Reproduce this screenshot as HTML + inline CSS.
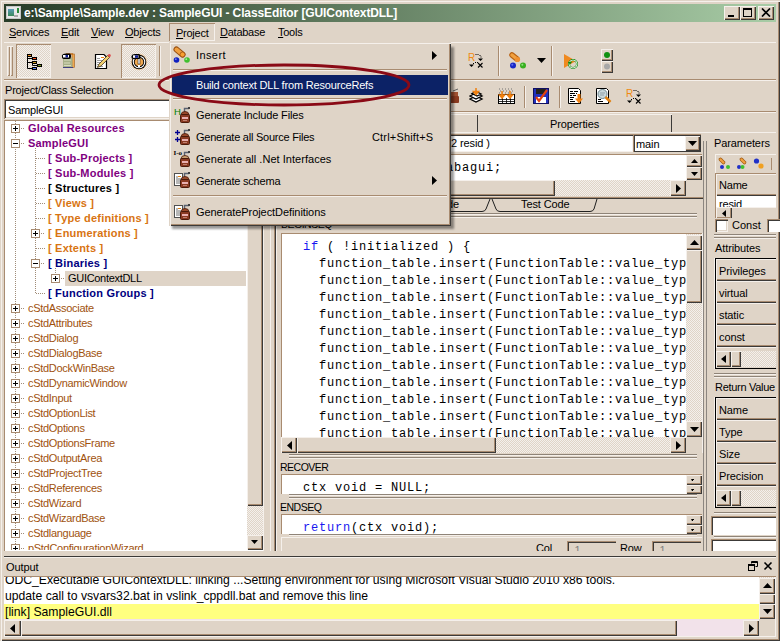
<!DOCTYPE html><html><head><meta charset="utf-8"><style>
*{margin:0;padding:0;box-sizing:border-box}
html,body{width:780px;height:641px;overflow:hidden;background:#dfd4c7;font-family:"Liberation Sans",sans-serif;font-size:11px;color:#000}
div{position:absolute}
.t{white-space:nowrap;line-height:13px;letter-spacing:-0.2px}
.raised{background:#dfd4c7;box-shadow:inset 1px 1px 0 #f5f0eb, inset -1px -1px 0 #3c3a38, inset -2px -2px 0 #a88b70}
.raisedf{background:#dfd4c7;box-shadow:inset 1px 1px 0 #dfd4c7, inset 2px 2px 0 #f5f0eb, inset -1px -1px 0 #3c3a38, inset -2px -2px 0 #a88b70}
.sunk{background:#fff;box-shadow:inset 1px 1px 0 #a88b70, inset -1px -1px 0 #f5f0eb, inset 2px 2px 0 #3c3a38, inset -2px -2px 0 #dfd4c7}
.sunk1{box-shadow:inset 1px 1px 0 #a88b70, inset -1px -1px 0 #f5f0eb}
.raise1{box-shadow:inset 1px 1px 0 #f5f0eb, inset -1px -1px 0 #a88b70}
.check{background-color:#dfd4c7;background-image:repeating-conic-gradient(#f4f0ec 0 25%, #dfd4c7 0 50%);background-size:2px 2px}
.hl{height:1px;background:#a88b70}
.hw{height:1px;background:#f5f0eb}
.mono{font-family:"Liberation Mono",monospace;font-size:12px;letter-spacing:0.8px;white-space:nowrap;line-height:17px;padding-top:1px}
</style></head><body>
<div style="left:0px;top:0px;width:780px;height:641px;box-shadow:inset 1px 1px 0 #dfd4c7, inset 2px 2px 0 #f5f0eb, inset -1px -1px 0 #3c3a38, inset -2px -2px 0 #a88b70;background:#dfd4c7"></div>
<div style="left:4px;top:4px;width:772px;height:18px;background:linear-gradient(to right,#283c27 0%,#a8cca6 100%)"></div>
<div style="left:6px;top:6px;width:15px;height:13px;background:#e8e8e8;border:1px solid #c8c8c8"><div style="left:1px;top:2px;width:6px;height:7px;background:linear-gradient(#5a9ab8,#3a8a5a)"></div><div style="left:10px;top:1px;width:2px;height:5px;background:#2a8a3a"></div><div style="left:7px;top:8px;width:4px;height:2px;background:#aaa"></div></div>
<div class="t" style="left:24px;top:6px;font-weight:bold;font-size:12px;color:#fff;line-height:15px;letter-spacing:-0.1px">e:\Sample\Sample.dev : SampleGUI - ClassEditor [GUIContextDLL]</div>
<div class="raised" style="left:724px;top:6px;width:16px;height:14px;"></div>
<div class="raised" style="left:740px;top:6px;width:16px;height:14px;"></div>
<div class="raised" style="left:758px;top:6px;width:16px;height:14px;"></div>
<div style="left:728px;top:15px;width:6px;height:2px;background:#000"></div>
<div style="left:743px;top:8px;width:9px;height:9px;border:1px solid #000;border-top-width:2px"></div>
<svg style="position:absolute;left:761px;top:8px" width="10" height="9" viewBox="0 0 10 9"><path d="M1 0.5l8 8M9 0.5l-8 8" stroke="#000" stroke-width="1.7"/></svg>
<div class="t" style="left:9px;top:26px;font-size:11px;letter-spacing:-0.25px"><u>S</u>ervices</div>
<div class="t" style="left:61px;top:26px;font-size:11px;letter-spacing:-0.25px"><u>E</u>dit</div>
<div class="t" style="left:91px;top:26px;font-size:11px;letter-spacing:-0.25px"><u>V</u>iew</div>
<div class="t" style="left:125px;top:26px;font-size:11px;letter-spacing:-0.25px"><u>O</u>bjects</div>
<div class="t" style="left:176px;top:27px;font-size:11px;letter-spacing:-0.25px"><u>P</u>roject</div>
<div class="t" style="left:220px;top:26px;font-size:11px;letter-spacing:-0.25px"><u>D</u>atabase</div>
<div class="t" style="left:278px;top:26px;font-size:11px;letter-spacing:-0.25px"><u>T</u>ools</div>
<div class="sunk1" style="left:169px;top:23px;width:46px;height:18px;"></div>
<div style="left:4px;top:42px;width:772px;height:1px;background:#f5f0eb"></div>
<div class="raise1" style="left:7px;top:46px;width:3px;height:30px;"></div>
<div class="raise1" style="left:10px;top:46px;width:3px;height:30px;"></div>
<div class="check sunk1" style="left:16px;top:44px;width:35px;height:34px;"></div>
<div class="check sunk1" style="left:121px;top:44px;width:35px;height:34px;"></div>
<div style="left:4px;top:79px;width:772px;height:1px;background:#a88b70"></div>
<div style="left:4px;top:80px;width:772px;height:1px;background:#f5f0eb"></div>
<svg style="position:absolute;left:24px;top:50px" width="24" height="24" viewBox="24 50 24 24"><path d="M27.5 56v12.5H32M27.5 58.5H32M27.5 62.5H32M32.5 63v2.5H37" stroke="#000" fill="none" stroke-width="1"/><rect x="27" y="54" width="5" height="3" fill="#000"/><rect x="28" y="55" width="3" height="1" fill="#f09020"/><rect x="32" y="57" width="5" height="3" fill="#000"/><rect x="33" y="58" width="3" height="1" fill="#f05020"/><rect x="32" y="61" width="5" height="3" fill="#000"/><rect x="33" y="62" width="3" height="1" fill="#d0a020"/><rect x="37" y="64" width="5" height="3" fill="#000"/><rect x="38" y="65" width="3" height="1" fill="#80a020"/><rect x="32" y="67" width="5" height="3" fill="#000"/><rect x="33" y="68" width="3" height="1" fill="#5080f0"/></svg>
<svg style="position:absolute;left:56px;top:50px" width="24" height="24" viewBox="56 50 24 24"><rect x="72" y="54" width="2.5" height="13.5" fill="#f0a850" stroke="#a06020" stroke-width="0.6"/><rect x="63" y="57.5" width="9.5" height="10" fill="#a8b088"/><path d="M64 60h7M64 63h6M64 65.5h7" stroke="#d8dcc0" stroke-width="1"/><path d="M63 67.5h10" stroke="#404080" stroke-width="1"/><path d="M66 54h7" stroke="#c07020" stroke-width="1.5"/><path d="M62 55.5Q62.5 53.5 66 53.5H69.5Q71 53.5 71 56.5Q71 59 69 59H64Q61.5 59 62 55.5z" fill="#000"/><rect x="63" y="55" width="6" height="2.5" fill="#fff"/><rect x="65.5" y="55" width="2.5" height="2.5" fill="#102090"/></svg>
<svg style="position:absolute;left:90px;top:50px" width="24" height="24" viewBox="90 50 24 24"><path d="M95.5 54.5H104L106.5 57V68.5H95.5z" fill="#fff" stroke="#000" stroke-width="1.2"/><path d="M97 58.5h3M97 60.5h5M97 62.5h4M97 64.5h3M97 66.5h6" stroke="#909090" stroke-width="0.9"/><path d="M101 57.5h3" stroke="#f08010" stroke-width="1"/><path d="M97.5 67.5L99 64L107.5 55.5L109.5 57.5L101 66z" fill="#f0d070" stroke="#302010" stroke-width="0.7"/><path d="M107.5 55.5L108.5 54.3Q109.5 53.5 110.5 54.5Q111.3 55.5 110.5 56.5L109.5 57.5z" fill="#e05050"/></svg>
<svg style="position:absolute;left:126px;top:50px" width="24" height="24" viewBox="126 50 24 24"><circle cx="139" cy="62" r="8.3" fill="#f8c890" opacity="0.7"/><circle cx="139" cy="62" r="7.3" fill="#000"/><circle cx="139" cy="62" r="6.3" fill="#fff"/><circle cx="139" cy="62" r="5.2" fill="#000"/><circle cx="139" cy="62" r="4.3" fill="#f0a850"/><rect x="138" y="58" width="2" height="6" fill="#fff" stroke="#000" stroke-width="0.5"/><rect x="138" y="65" width="2" height="2" fill="#fff"/><path d="M131.5 56Q132 54 135 54H139Q140.5 54 140.5 56.5Q140.5 59 139 59H133.5Q131 59 131.5 56z" fill="#000"/><rect x="133" y="55.3" width="5.5" height="2.5" fill="#fff"/><rect x="135" y="55.3" width="3" height="2.5" fill="#102090"/></svg>
<div style="left:159px;top:46px;width:1px;height:30px;background:#a88b70"></div>
<div style="left:160px;top:46px;width:1px;height:30px;background:#f5f0eb"></div>
<div class="t" style="left:5px;top:84px;font-size:11px;letter-spacing:-0.2px;color:#000">Project/Class Selection</div>
<div class="sunk" style="left:4px;top:99px;width:260px;height:20px;"></div>
<div class="t" style="left:8px;top:104px;font-size:11px;letter-spacing:-0.2px">SampleGUI</div>
<div style="left:4px;top:120px;width:260px;height:432px;background:#fff;box-shadow:inset 1px 1px 0 #a88b70, inset -1px -1px 0 #f5f0eb"></div>
<div style="left:0;top:0;width:246px;height:550px;overflow:hidden">
<div style="left:15px;top:121px;width:1px;height:430px;background:repeating-linear-gradient(#a08c78 0 1px,transparent 1px 2px)"></div>
<div style="left:35px;top:148px;width:1px;height:146px;background:repeating-linear-gradient(#a08c78 0 1px,transparent 1px 2px)"></div>
<div style="left:55px;top:268px;width:1px;height:6px;background:repeating-linear-gradient(#a08c78 0 1px,transparent 1px 2px)"></div>
<div style="left:11px;top:124px;width:9px;height:9px;background:#fff;border:1px solid #a88b70"></div>
<div style="left:13px;top:128px;width:5px;height:1px;background:#000"></div>
<div style="left:15px;top:126px;width:1px;height:5px;background:#000"></div>
<div style="left:21px;top:128px;width:4px;height:1px;background:repeating-linear-gradient(to right,#a08c78 0 1px,transparent 1px 2px)"></div>
<div class="t" style="left:28px;top:121px;color:#800080;font-weight:bold;line-height:14px;letter-spacing:0.2px">Global Resources</div>
<div style="left:11px;top:139px;width:9px;height:9px;background:#fff;border:1px solid #a88b70"></div>
<div style="left:13px;top:143px;width:5px;height:1px;background:#000"></div>
<div style="left:21px;top:143px;width:4px;height:1px;background:repeating-linear-gradient(to right,#a08c78 0 1px,transparent 1px 2px)"></div>
<div class="t" style="left:28px;top:136px;color:#800080;font-weight:bold;line-height:14px;letter-spacing:0.2px">SampleGUI</div>
<div style="left:36px;top:158px;width:9px;height:1px;background:repeating-linear-gradient(to right,#a08c78 0 1px,transparent 1px 2px)"></div>
<div class="t" style="left:48px;top:151px;color:#800080;font-weight:bold;line-height:14px;letter-spacing:0.2px">[ Sub-Projects ]</div>
<div style="left:36px;top:173px;width:9px;height:1px;background:repeating-linear-gradient(to right,#a08c78 0 1px,transparent 1px 2px)"></div>
<div class="t" style="left:48px;top:166px;color:#800080;font-weight:bold;line-height:14px;letter-spacing:0.2px">[ Sub-Modules ]</div>
<div style="left:36px;top:188px;width:9px;height:1px;background:repeating-linear-gradient(to right,#a08c78 0 1px,transparent 1px 2px)"></div>
<div class="t" style="left:48px;top:181px;color:#000000;font-weight:bold;line-height:14px;letter-spacing:0.2px">[ Structures ]</div>
<div style="left:36px;top:203px;width:9px;height:1px;background:repeating-linear-gradient(to right,#a08c78 0 1px,transparent 1px 2px)"></div>
<div class="t" style="left:48px;top:196px;color:#d87412;font-weight:bold;line-height:14px;letter-spacing:0.2px">[ Views ]</div>
<div style="left:36px;top:218px;width:9px;height:1px;background:repeating-linear-gradient(to right,#a08c78 0 1px,transparent 1px 2px)"></div>
<div class="t" style="left:48px;top:211px;color:#d87412;font-weight:bold;line-height:14px;letter-spacing:0.2px">[ Type definitions ]</div>
<div style="left:31px;top:229px;width:9px;height:9px;background:#fff;border:1px solid #a88b70"></div>
<div style="left:33px;top:233px;width:5px;height:1px;background:#000"></div>
<div style="left:35px;top:231px;width:1px;height:5px;background:#000"></div>
<div style="left:41px;top:233px;width:4px;height:1px;background:repeating-linear-gradient(to right,#a08c78 0 1px,transparent 1px 2px)"></div>
<div class="t" style="left:48px;top:226px;color:#d87412;font-weight:bold;line-height:14px;letter-spacing:0.2px">[ Enumerations ]</div>
<div style="left:36px;top:248px;width:9px;height:1px;background:repeating-linear-gradient(to right,#a08c78 0 1px,transparent 1px 2px)"></div>
<div class="t" style="left:48px;top:241px;color:#d87412;font-weight:bold;line-height:14px;letter-spacing:0.2px">[ Extents ]</div>
<div style="left:31px;top:259px;width:9px;height:9px;background:#fff;border:1px solid #a88b70"></div>
<div style="left:33px;top:263px;width:5px;height:1px;background:#000"></div>
<div style="left:41px;top:263px;width:4px;height:1px;background:repeating-linear-gradient(to right,#a08c78 0 1px,transparent 1px 2px)"></div>
<div class="t" style="left:48px;top:256px;color:#000080;font-weight:bold;line-height:14px;letter-spacing:0.2px">[ Binaries ]</div>
<div style="left:65px;top:271px;width:182px;height:15px;background:#dfd4c7"></div>
<div style="left:51px;top:274px;width:9px;height:9px;background:#fff;border:1px solid #a88b70"></div>
<div style="left:53px;top:278px;width:5px;height:1px;background:#000"></div>
<div style="left:55px;top:276px;width:1px;height:5px;background:#000"></div>
<div style="left:61px;top:278px;width:4px;height:1px;background:repeating-linear-gradient(to right,#a08c78 0 1px,transparent 1px 2px)"></div>
<div class="t" style="left:68px;top:271px;color:#000000;font-weight:normal;line-height:14px;letter-spacing:-0.3px">GUIContextDLL</div>
<div style="left:36px;top:293px;width:9px;height:1px;background:repeating-linear-gradient(to right,#a08c78 0 1px,transparent 1px 2px)"></div>
<div class="t" style="left:48px;top:286px;color:#000080;font-weight:bold;line-height:14px;letter-spacing:0.2px">[ Function Groups ]</div>
<div style="left:11px;top:304px;width:9px;height:9px;background:#fff;border:1px solid #a88b70"></div>
<div style="left:13px;top:308px;width:5px;height:1px;background:#000"></div>
<div style="left:15px;top:306px;width:1px;height:5px;background:#000"></div>
<div style="left:21px;top:308px;width:4px;height:1px;background:repeating-linear-gradient(to right,#a08c78 0 1px,transparent 1px 2px)"></div>
<div class="t" style="left:28px;top:301px;color:#a0520e;font-weight:normal;line-height:14px;letter-spacing:-0.3px">cStdAssociate</div>
<div style="left:11px;top:319px;width:9px;height:9px;background:#fff;border:1px solid #a88b70"></div>
<div style="left:13px;top:323px;width:5px;height:1px;background:#000"></div>
<div style="left:15px;top:321px;width:1px;height:5px;background:#000"></div>
<div style="left:21px;top:323px;width:4px;height:1px;background:repeating-linear-gradient(to right,#a08c78 0 1px,transparent 1px 2px)"></div>
<div class="t" style="left:28px;top:316px;color:#a0520e;font-weight:normal;line-height:14px;letter-spacing:-0.3px">cStdAttributes</div>
<div style="left:11px;top:334px;width:9px;height:9px;background:#fff;border:1px solid #a88b70"></div>
<div style="left:13px;top:338px;width:5px;height:1px;background:#000"></div>
<div style="left:15px;top:336px;width:1px;height:5px;background:#000"></div>
<div style="left:21px;top:338px;width:4px;height:1px;background:repeating-linear-gradient(to right,#a08c78 0 1px,transparent 1px 2px)"></div>
<div class="t" style="left:28px;top:331px;color:#a0520e;font-weight:normal;line-height:14px;letter-spacing:-0.3px">cStdDialog</div>
<div style="left:11px;top:349px;width:9px;height:9px;background:#fff;border:1px solid #a88b70"></div>
<div style="left:13px;top:353px;width:5px;height:1px;background:#000"></div>
<div style="left:15px;top:351px;width:1px;height:5px;background:#000"></div>
<div style="left:21px;top:353px;width:4px;height:1px;background:repeating-linear-gradient(to right,#a08c78 0 1px,transparent 1px 2px)"></div>
<div class="t" style="left:28px;top:346px;color:#a0520e;font-weight:normal;line-height:14px;letter-spacing:-0.3px">cStdDialogBase</div>
<div style="left:11px;top:364px;width:9px;height:9px;background:#fff;border:1px solid #a88b70"></div>
<div style="left:13px;top:368px;width:5px;height:1px;background:#000"></div>
<div style="left:15px;top:366px;width:1px;height:5px;background:#000"></div>
<div style="left:21px;top:368px;width:4px;height:1px;background:repeating-linear-gradient(to right,#a08c78 0 1px,transparent 1px 2px)"></div>
<div class="t" style="left:28px;top:361px;color:#a0520e;font-weight:normal;line-height:14px;letter-spacing:-0.3px">cStdDockWinBase</div>
<div style="left:11px;top:379px;width:9px;height:9px;background:#fff;border:1px solid #a88b70"></div>
<div style="left:13px;top:383px;width:5px;height:1px;background:#000"></div>
<div style="left:15px;top:381px;width:1px;height:5px;background:#000"></div>
<div style="left:21px;top:383px;width:4px;height:1px;background:repeating-linear-gradient(to right,#a08c78 0 1px,transparent 1px 2px)"></div>
<div class="t" style="left:28px;top:376px;color:#a0520e;font-weight:normal;line-height:14px;letter-spacing:-0.3px">cStdDynamicWindow</div>
<div style="left:11px;top:394px;width:9px;height:9px;background:#fff;border:1px solid #a88b70"></div>
<div style="left:13px;top:398px;width:5px;height:1px;background:#000"></div>
<div style="left:15px;top:396px;width:1px;height:5px;background:#000"></div>
<div style="left:21px;top:398px;width:4px;height:1px;background:repeating-linear-gradient(to right,#a08c78 0 1px,transparent 1px 2px)"></div>
<div class="t" style="left:28px;top:391px;color:#a0520e;font-weight:normal;line-height:14px;letter-spacing:-0.3px">cStdInput</div>
<div style="left:11px;top:409px;width:9px;height:9px;background:#fff;border:1px solid #a88b70"></div>
<div style="left:13px;top:413px;width:5px;height:1px;background:#000"></div>
<div style="left:15px;top:411px;width:1px;height:5px;background:#000"></div>
<div style="left:21px;top:413px;width:4px;height:1px;background:repeating-linear-gradient(to right,#a08c78 0 1px,transparent 1px 2px)"></div>
<div class="t" style="left:28px;top:406px;color:#a0520e;font-weight:normal;line-height:14px;letter-spacing:-0.3px">cStdOptionList</div>
<div style="left:11px;top:424px;width:9px;height:9px;background:#fff;border:1px solid #a88b70"></div>
<div style="left:13px;top:428px;width:5px;height:1px;background:#000"></div>
<div style="left:15px;top:426px;width:1px;height:5px;background:#000"></div>
<div style="left:21px;top:428px;width:4px;height:1px;background:repeating-linear-gradient(to right,#a08c78 0 1px,transparent 1px 2px)"></div>
<div class="t" style="left:28px;top:421px;color:#a0520e;font-weight:normal;line-height:14px;letter-spacing:-0.3px">cStdOptions</div>
<div style="left:11px;top:439px;width:9px;height:9px;background:#fff;border:1px solid #a88b70"></div>
<div style="left:13px;top:443px;width:5px;height:1px;background:#000"></div>
<div style="left:15px;top:441px;width:1px;height:5px;background:#000"></div>
<div style="left:21px;top:443px;width:4px;height:1px;background:repeating-linear-gradient(to right,#a08c78 0 1px,transparent 1px 2px)"></div>
<div class="t" style="left:28px;top:436px;color:#a0520e;font-weight:normal;line-height:14px;letter-spacing:-0.3px">cStdOptionsFrame</div>
<div style="left:11px;top:454px;width:9px;height:9px;background:#fff;border:1px solid #a88b70"></div>
<div style="left:13px;top:458px;width:5px;height:1px;background:#000"></div>
<div style="left:15px;top:456px;width:1px;height:5px;background:#000"></div>
<div style="left:21px;top:458px;width:4px;height:1px;background:repeating-linear-gradient(to right,#a08c78 0 1px,transparent 1px 2px)"></div>
<div class="t" style="left:28px;top:451px;color:#a0520e;font-weight:normal;line-height:14px;letter-spacing:-0.3px">cStdOutputArea</div>
<div style="left:11px;top:469px;width:9px;height:9px;background:#fff;border:1px solid #a88b70"></div>
<div style="left:13px;top:473px;width:5px;height:1px;background:#000"></div>
<div style="left:15px;top:471px;width:1px;height:5px;background:#000"></div>
<div style="left:21px;top:473px;width:4px;height:1px;background:repeating-linear-gradient(to right,#a08c78 0 1px,transparent 1px 2px)"></div>
<div class="t" style="left:28px;top:466px;color:#a0520e;font-weight:normal;line-height:14px;letter-spacing:-0.3px">cStdProjectTree</div>
<div style="left:11px;top:484px;width:9px;height:9px;background:#fff;border:1px solid #a88b70"></div>
<div style="left:13px;top:488px;width:5px;height:1px;background:#000"></div>
<div style="left:15px;top:486px;width:1px;height:5px;background:#000"></div>
<div style="left:21px;top:488px;width:4px;height:1px;background:repeating-linear-gradient(to right,#a08c78 0 1px,transparent 1px 2px)"></div>
<div class="t" style="left:28px;top:481px;color:#a0520e;font-weight:normal;line-height:14px;letter-spacing:-0.3px">cStdReferences</div>
<div style="left:11px;top:499px;width:9px;height:9px;background:#fff;border:1px solid #a88b70"></div>
<div style="left:13px;top:503px;width:5px;height:1px;background:#000"></div>
<div style="left:15px;top:501px;width:1px;height:5px;background:#000"></div>
<div style="left:21px;top:503px;width:4px;height:1px;background:repeating-linear-gradient(to right,#a08c78 0 1px,transparent 1px 2px)"></div>
<div class="t" style="left:28px;top:496px;color:#a0520e;font-weight:normal;line-height:14px;letter-spacing:-0.3px">cStdWizard</div>
<div style="left:11px;top:514px;width:9px;height:9px;background:#fff;border:1px solid #a88b70"></div>
<div style="left:13px;top:518px;width:5px;height:1px;background:#000"></div>
<div style="left:15px;top:516px;width:1px;height:5px;background:#000"></div>
<div style="left:21px;top:518px;width:4px;height:1px;background:repeating-linear-gradient(to right,#a08c78 0 1px,transparent 1px 2px)"></div>
<div class="t" style="left:28px;top:511px;color:#a0520e;font-weight:normal;line-height:14px;letter-spacing:-0.3px">cStdWizardBase</div>
<div style="left:11px;top:529px;width:9px;height:9px;background:#fff;border:1px solid #a88b70"></div>
<div style="left:13px;top:533px;width:5px;height:1px;background:#000"></div>
<div style="left:15px;top:531px;width:1px;height:5px;background:#000"></div>
<div style="left:21px;top:533px;width:4px;height:1px;background:repeating-linear-gradient(to right,#a08c78 0 1px,transparent 1px 2px)"></div>
<div class="t" style="left:28px;top:526px;color:#a0520e;font-weight:normal;line-height:14px;letter-spacing:-0.3px">cStdlanguage</div>
<div style="left:11px;top:544px;width:9px;height:9px;background:#fff;border:1px solid #a88b70"></div>
<div style="left:13px;top:548px;width:5px;height:1px;background:#000"></div>
<div style="left:15px;top:546px;width:1px;height:5px;background:#000"></div>
<div style="left:21px;top:548px;width:4px;height:1px;background:repeating-linear-gradient(to right,#a08c78 0 1px,transparent 1px 2px)"></div>
<div class="t" style="left:28px;top:541px;color:#a0520e;font-weight:normal;line-height:14px;letter-spacing:-0.3px">pStdConfigurationWizard</div>
</div>
<div class="check" style="left:247px;top:120px;width:16px;height:430px;"></div>
<div class="raised" style="left:247px;top:120px;width:16px;height:16px;"></div>
<div class="raised" style="left:247px;top:136px;width:16px;height:370px;"></div>
<div class="raised" style="left:247px;top:535px;width:16px;height:15px;"></div>
<svg style="position:absolute;left:251px;top:540px" width="7" height="4"><path d="M0 0h7l-3.5 4z" fill="#000"/></svg>
<div style="left:263px;top:118px;width:1px;height:433px;background:#f5f0eb"></div>
<div style="left:270px;top:118px;width:1px;height:433px;background:#f5f0eb"></div>
<div style="left:274px;top:118px;width:1px;height:433px;background:#a88b70"></div>
<div style="left:275px;top:118px;width:1px;height:433px;background:#3c3a38"></div>
<div style="left:276px;top:118px;width:1px;height:433px;background:#f5f0eb"></div>
<div style="left:276px;top:111px;width:500px;height:1px;background:#a88b70"></div>
<div style="left:276px;top:112px;width:500px;height:1px;background:#f5f0eb"></div>
<div style="left:524px;top:86px;width:1px;height:22px;background:#a88b70"></div>
<div style="left:525px;top:86px;width:1px;height:22px;background:#f5f0eb"></div>
<div style="left:559px;top:86px;width:1px;height:22px;background:#a88b70"></div>
<div style="left:560px;top:86px;width:1px;height:22px;background:#f5f0eb"></div>
<div style="left:498px;top:46px;width:1px;height:30px;background:#a88b70"></div>
<div style="left:499px;top:46px;width:1px;height:30px;background:#f5f0eb"></div>
<div style="left:551px;top:46px;width:1px;height:30px;background:#a88b70"></div>
<div style="left:552px;top:46px;width:1px;height:30px;background:#f5f0eb"></div>
<svg style="position:absolute;left:468px;top:53px" width="16" height="16" viewBox="0 0 16 16"><text x="0" y="8" font-size="10" fill="#f08a10" font-family="Liberation Sans">R</text><path d="M7.5 1.5h1M9.5 1.5h1M11.5 2.5h1M12.5 4h1" stroke="#000" stroke-width="1"/><path d="M10 5.5h5l-2.5 2.5z" fill="#000"/><path d="M5 10.5h1M7 9.5h1M9 9.5h1" stroke="#000"/><path d="M1 11.5h5l-2.5 2.5z" fill="#000"/><path d="M10 10l4.5 4.5M14.5 10l-4.5 4.5" stroke="#000" stroke-width="1.1"/></svg>
<svg style="position:absolute;left:626px;top:89px" width="16" height="16" viewBox="0 0 16 16"><text x="0" y="8" font-size="10" fill="#f08a10" font-family="Liberation Sans">R</text><path d="M7.5 1.5h1M9.5 1.5h1M11.5 2.5h1M12.5 4h1" stroke="#000" stroke-width="1"/><path d="M10 5.5h5l-2.5 2.5z" fill="#000"/><path d="M5 10.5h1M7 9.5h1M9 9.5h1" stroke="#000"/><path d="M1 11.5h5l-2.5 2.5z" fill="#000"/><path d="M10 10l4.5 4.5M14.5 10l-4.5 4.5" stroke="#000" stroke-width="1.1"/></svg>
<svg style="position:absolute;left:509px;top:52px" width="18" height="17" viewBox="0 0 18 17"><path d="M3 3l5 4" stroke="#b86010" stroke-width="5.5" stroke-linecap="round"/><path d="M3 3l5 4" stroke="#f0a040" stroke-width="3.5" stroke-linecap="round"/><circle cx="8.5" cy="7.5" r="2.6" fill="#f09030"/><circle cx="4" cy="13.5" r="3" fill="#1828c8"/><circle cx="3.3" cy="12.8" r="1" fill="#6070f0"/><circle cx="14" cy="13.5" r="3" fill="#38b020"/><circle cx="13.3" cy="12.8" r="1" fill="#90e080"/></svg>
<svg style="position:absolute;left:537px;top:58px" width="9" height="5"><path d="M0 0h9l-4.5 5z" fill="#000"/></svg>
<svg style="position:absolute;left:563px;top:53px" width="16" height="16" viewBox="0 0 16 16"><path d="M1 1L13 8L1 15z" fill="#f08a20"/><circle cx="10" cy="11" r="4" fill="none" stroke="#108a10" stroke-width="2"/><circle cx="10" cy="11" r="4" fill="none" stroke="#fff" stroke-width="0.8"/><path d="M5 9l2 2.5 2-2.5z" fill="#108a10"/></svg>
<div class="raised" style="left:601px;top:49px;width:12px;height:12px;"></div>
<div class="raised" style="left:601px;top:61px;width:12px;height:12px;"></div>
<svg style="position:absolute;left:603px;top:51px" width="8" height="20"><circle cx="4" cy="4" r="3" fill="#109010"/><circle cx="4" cy="15.5" r="3" fill="#a8a8a8"/></svg>
<svg style="position:absolute;left:447px;top:88px" width="12" height="16" viewBox="0 0 12 16"><rect x="3" y="4" width="8" height="4" fill="#a05030"/><rect x="2" y="8" width="10" height="7" rx="1" fill="#8a3a20"/><path d="M6 3l5-2" stroke="#606060"/></svg>
<svg style="position:absolute;left:469px;top:88px" width="16" height="16" viewBox="0 0 16 16"><path d="M1 11l6-3 6 3-6 3z" fill="#fff" stroke="#000" stroke-width="1.3"/><path d="M1 8l6-3 6 3-6 3z" fill="#fff" stroke="#000" stroke-width="1.3"/><path d="M3 5.5l4-2 5 2.5-4 2z" fill="#fff" stroke="#000" stroke-width="1.3"/><path d="M7 0v5M4.5 3.5L7 6.5 9.5 3.5z" stroke="#f08010" fill="#f08010" stroke-width="1.5"/></svg>
<svg style="position:absolute;left:498px;top:88px" width="17" height="17" viewBox="0 0 17 17"><path d="M1 1h1M4 1h1M7 1h1M10 1h1M13 1h1M2 3h1M5 3h1M8 3h1M11 3h1M14 3h1M1 5h1M4 5h1M7 5h1M10 5h1M13 5h1" stroke="#707070"/><rect x="0.5" y="6.5" width="16" height="9" fill="#fff" stroke="#000"/><path d="M0.5 11.5h16M0.5 13.5h16M4.5 10v6M8.5 10v6M12.5 10v6" stroke="#000" stroke-width="0.8"/><path d="M4 3v6M1.5 7L4 10 6.5 7zM12 3v6M9.5 7L12 10 14.5 7z" stroke="#f08010" fill="#f08010" stroke-width="1.5"/></svg>
<svg style="position:absolute;left:533px;top:88px" width="16" height="16" viewBox="0 0 16 16"><rect x="0.5" y="0.5" width="15" height="15" fill="#2030c0" stroke="#101060"/><rect x="3" y="1" width="10" height="5" fill="#202020"/><rect x="3" y="9" width="10" height="6" fill="#fff"/><path d="M3 9l3 4 8-11" stroke="#e04010" stroke-width="2.2" fill="none"/></svg>
<svg style="position:absolute;left:568px;top:88px" width="17" height="16" viewBox="0 0 17 16"><path d="M0.5 0.5h10l2 2v13h-12z" fill="#fff" stroke="#000"/><path d="M2 3.5h3M6 3.5h4M2 5.5h5M8 5.5h1M2 7.5h2M5 7.5h3M2 9.5h4M2 11.5h3M2 13.5h5" stroke="#000" stroke-width="1"/><path d="M11 6v5.5" stroke="#f08010" stroke-width="3"/><path d="M7 10.5h8l-4 5z" fill="#f08010"/></svg>
<svg style="position:absolute;left:596px;top:88px" width="17" height="17" viewBox="0 0 17 17"><path d="M0.5 0.5h10l2 2v13h-12z" fill="#fff" stroke="#000"/><path d="M2 11.5h3M2 13.5h5" stroke="#000" stroke-width="1"/><circle cx="6.5" cy="6" r="4.5" fill="#c8d8dc" stroke="#708890"/><path d="M4 5h5M4 7h4" stroke="#90a0a8"/><path d="M9.5 9l5 5" stroke="#e08010" stroke-width="2.5"/></svg>
<div style="left:277px;top:114px;width:395px;height:1px;background:#f5f0eb"></div>
<div style="left:477px;top:115px;width:1px;height:18px;background:#3c3a38"></div>
<div style="left:671px;top:115px;width:1px;height:18px;background:#3c3a38"></div>
<div class="t" style="left:550px;top:118px;font-size:11px;letter-spacing:-0.1px">Properties</div>
<div style="left:277px;top:132px;width:499px;height:1px;background:#f5f0eb"></div>
<div style="left:281px;top:134px;width:352px;height:18px;background:#fff;box-shadow:inset 1px 1px 0 #a88b70, inset 2px 2px 0 #3c3a38, inset -1px -1px 0 #f5f0eb"></div>
<div class="t" style="left:451px;top:137px;letter-spacing:-0.1px">2 resid )</div>
<div style="left:633px;top:134px;width:68px;height:18px;background:#fff;box-shadow:inset 1px 1px 0 #a88b70, inset 2px 2px 0 #3c3a38, inset -1px -1px 0 #3c3a38"></div>
<div class="t" style="left:636px;top:138px;letter-spacing:-0.1px">main</div>
<div class="raised" style="left:685px;top:136px;width:15px;height:15px;"></div>
<svg style="position:absolute;left:688px;top:141px" width="9" height="5"><path d="M0 0h9l-4.5 5z" fill="#000"/></svg>
<div style="left:281px;top:154px;width:421px;height:26px;background:#fff;box-shadow:inset 0 1px 0 #a88b70, inset 1px 0 0 #a88b70"></div>
<div class="mono" style="left:446px;top:159px">abagui;</div>
<div class="raised" style="left:686px;top:155px;width:16px;height:12px;"></div>
<div class="raised" style="left:686px;top:167px;width:16px;height:13px;"></div>
<svg style="position:absolute;left:691px;top:159px" width="7" height="4"><path d="M3.5 0L7 4H0z" fill="#000"/></svg>
<svg style="position:absolute;left:691px;top:172px" width="7" height="4"><path d="M0 0h7l-3.5 4z" fill="#000"/></svg>
<div class="check" style="left:281px;top:180px;width:405px;height:16px;"></div>
<div class="raised" style="left:281px;top:180px;width:274px;height:16px;"></div>
<div class="raised" style="left:670px;top:180px;width:16px;height:16px;"></div>
<svg style="position:absolute;left:676px;top:184px" width="5" height="9"><path d="M0 0v9l5-4.5z" fill="#000"/></svg>
<div style="left:686px;top:180px;width:16px;height:17px;background:#dfd4c7"></div>
<div style="left:277px;top:197px;width:426px;height:1px;background:#a88b70"></div>
<div style="left:277px;top:198px;width:426px;height:1px;background:#3c3a38"></div>
<svg style="position:absolute;left:276px;top:197px" width="424" height="16"><path d="M0 14.5H206Q209 14.5 210 12L214 2M216 2L220 12Q221 14.5 224 14.5H314Q317 14.5 318 12L321 2" stroke="#202020" fill="none"/></svg>
<div class="t" style="left:521px;top:198px;font-size:11px;letter-spacing:-0.1px">Test Code</div>
<div class="t" style="left:447px;top:198px;font-size:11px">de</div>
<div style="left:281px;top:213px;width:416px;height:1px;background:#8f8478"></div>
<div style="left:281px;top:214px;width:416px;height:1px;background:#f5f0eb"></div>
<div style="left:281px;top:216px;width:416px;height:1px;background:#8f8478"></div>
<div style="left:281px;top:217px;width:416px;height:1px;background:#f5f0eb"></div>
<div class="t" style="left:281px;top:218px;font-size:10.5px;letter-spacing:-0.5px">BEGINSEQ</div>
<div style="left:281px;top:233px;width:422px;height:220px;background:#fff;box-shadow:inset 1px 1px 0 #a88b70"></div>
<div class="mono" style="left:303px;top:238px"><span style="color:#1818f0">if</span> ( !initialized ) {</div>
<div class="mono" style="left:319px;top:255px;height:17px;overflow:hidden">function_table.insert(FunctionTable::value_typ</div>
<div class="mono" style="left:319px;top:272px;height:17px;overflow:hidden">function_table.insert(FunctionTable::value_typ</div>
<div class="mono" style="left:319px;top:289px;height:17px;overflow:hidden">function_table.insert(FunctionTable::value_typ</div>
<div class="mono" style="left:319px;top:306px;height:17px;overflow:hidden">function_table.insert(FunctionTable::value_typ</div>
<div class="mono" style="left:319px;top:323px;height:17px;overflow:hidden">function_table.insert(FunctionTable::value_typ</div>
<div class="mono" style="left:319px;top:340px;height:17px;overflow:hidden">function_table.insert(FunctionTable::value_typ</div>
<div class="mono" style="left:319px;top:357px;height:17px;overflow:hidden">function_table.insert(FunctionTable::value_typ</div>
<div class="mono" style="left:319px;top:374px;height:17px;overflow:hidden">function_table.insert(FunctionTable::value_typ</div>
<div class="mono" style="left:319px;top:391px;height:17px;overflow:hidden">function_table.insert(FunctionTable::value_typ</div>
<div class="mono" style="left:319px;top:408px;height:17px;overflow:hidden">function_table.insert(FunctionTable::value_typ</div>
<div class="mono" style="left:319px;top:425px;height:17px;overflow:hidden">function_table.insert(FunctionTable::value_typ</div>
<div class="check" style="left:686px;top:234px;width:16px;height:203px;"></div>
<div class="raised" style="left:686px;top:235px;width:16px;height:15px;"></div>
<div class="raised" style="left:686px;top:250px;width:16px;height:53px;"></div>
<div class="raised" style="left:686px;top:421px;width:16px;height:16px;"></div>
<svg style="position:absolute;left:690px;top:240px" width="9" height="5"><path d="M4.5 0L9 5H0z" fill="#000"/></svg>
<svg style="position:absolute;left:690px;top:427px" width="9" height="5"><path d="M0 0h9l-4.5 5z" fill="#000"/></svg>
<div class="check" style="left:282px;top:437px;width:404px;height:16px;"></div>
<div class="raised" style="left:281px;top:437px;width:16px;height:16px;"></div>
<div class="raised" style="left:297px;top:437px;width:199px;height:16px;"></div>
<div class="raised" style="left:670px;top:437px;width:16px;height:16px;"></div>
<svg style="position:absolute;left:287px;top:441px" width="5" height="9"><path d="M5 0v9L0 4.5z" fill="#000"/></svg>
<svg style="position:absolute;left:676px;top:441px" width="5" height="9"><path d="M0 0v9l5-4.5z" fill="#000"/></svg>
<div style="left:686px;top:437px;width:16px;height:16px;background:#dfd4c7"></div>
<div style="left:702px;top:233px;width:1px;height:220px;background:#f5f0eb"></div>
<div style="left:289px;top:454px;width:408px;height:1px;background:#8f8478"></div>
<div style="left:289px;top:455px;width:408px;height:1px;background:#f5f0eb"></div>
<div style="left:289px;top:457px;width:408px;height:1px;background:#8f8478"></div>
<div style="left:289px;top:458px;width:408px;height:1px;background:#f5f0eb"></div>
<div class="t" style="left:280px;top:461px;font-size:10.5px;letter-spacing:-0.5px">RECOVER</div>
<div style="left:281px;top:474px;width:421px;height:20px;background:#fff;box-shadow:inset 1px 1px 0 #a88b70"></div>
<div class="mono" style="left:303px;top:479px">ctx void = NULL;</div>
<div class="raised" style="left:686px;top:475px;width:16px;height:10px;"></div>
<div class="raised" style="left:686px;top:485px;width:16px;height:9px;"></div>
<svg style="position:absolute;left:691px;top:479px" width="4" height="3"><path d="M0 0h3v1h-1v1h-1z" fill="#000"/></svg>
<svg style="position:absolute;left:691px;top:489px" width="4" height="3"><path d="M0 0h3v1h-1v1h-1z" fill="#000"/></svg>
<div style="left:289px;top:494px;width:408px;height:1px;background:#8f8478"></div>
<div style="left:289px;top:495px;width:408px;height:1px;background:#f5f0eb"></div>
<div style="left:289px;top:497px;width:408px;height:1px;background:#8f8478"></div>
<div style="left:289px;top:498px;width:408px;height:1px;background:#f5f0eb"></div>
<div class="t" style="left:280px;top:501px;font-size:10.5px;letter-spacing:-0.5px">ENDSEQ</div>
<div style="left:281px;top:514px;width:421px;height:20px;background:#fff;box-shadow:inset 1px 1px 0 #a88b70"></div>
<div class="mono" style="left:303px;top:519px"><span style="color:#1818f0">return</span>(ctx void);</div>
<div class="raised" style="left:686px;top:515px;width:16px;height:10px;"></div>
<div class="raised" style="left:686px;top:525px;width:16px;height:9px;"></div>
<svg style="position:absolute;left:691px;top:519px" width="4" height="3"><path d="M0 0h3v1h-1v1h-1z" fill="#000"/></svg>
<svg style="position:absolute;left:691px;top:529px" width="4" height="3"><path d="M0 0h3v1h-1v1h-1z" fill="#000"/></svg>
<div style="left:289px;top:534px;width:408px;height:1px;background:#8f8478"></div>
<div style="left:289px;top:535px;width:408px;height:1px;background:#f5f0eb"></div>
<div style="left:281px;top:537px;width:421px;height:14px;box-shadow:inset 1px 1px 0 #f5f0eb"></div>
<div class="t" style="left:536px;top:542px;font-size:11px;letter-spacing:-0.1px">Col</div>
<div style="left:567px;top:541px;width:49px;height:10px;box-shadow:inset 1px 1px 0 #a88b70, inset 2px 2px 0 #3c3a38"></div>
<div class="t" style="left:571px;top:544px;font-size:11px;color:#808080">-1</div>
<div class="t" style="left:620px;top:542px;font-size:11px;letter-spacing:-0.1px">Row</div>
<div style="left:652px;top:541px;width:49px;height:10px;box-shadow:inset 1px 1px 0 #a88b70, inset 2px 2px 0 #3c3a38"></div>
<div class="t" style="left:656px;top:544px;font-size:11px;color:#808080">-1</div>
<div style="left:276px;top:551px;width:500px;height:5px;background:#dfd4c7"></div>
<div style="left:703px;top:141px;width:1px;height:410px;background:#8c8680"></div>
<div style="left:706px;top:141px;width:1px;height:410px;background:#8c8680"></div>
<div style="left:714px;top:258px;width:1px;height:111px;background:#f5f0eb"></div>
<div style="left:714px;top:397px;width:1px;height:111px;background:#f5f0eb"></div>
<div class="t" style="left:714px;top:137px;font-size:11px;letter-spacing:-0.1px">Parameters</div>
<div style="left:715px;top:154px;width:61px;height:19px;box-shadow:inset 1px 1px 0 #f5f0eb"></div>
<svg style="position:absolute;left:715px;top:154px" width="61" height="19" viewBox="0 0 61 19"><path d="M5.5 5.5l3 3" stroke="#a05a10" stroke-width="3.6" stroke-linecap="round"/><path d="M5.5 5.5l3 3" stroke="#f0a040" stroke-width="2.2" stroke-linecap="round"/><circle cx="7" cy="13" r="2" fill="#2030c8"/><circle cx="13" cy="13" r="2" fill="#40c030"/><path d="M26.5 5.5l3 3" stroke="#a05a10" stroke-width="3.6" stroke-linecap="round"/><path d="M26.5 5.5l3 3" stroke="#f0a040" stroke-width="2.2" stroke-linecap="round"/><circle cx="24" cy="13" r="2" fill="#2030c8"/><circle cx="27.5" cy="13" r="2" fill="#40c030"/><circle cx="41.5" cy="7" r="2.6" fill="#2030c8"/><circle cx="46" cy="12" r="2.6" fill="#f0a020"/><path d="M56.5 4v12" stroke="#a88b70"/></svg>
<div style="left:715px;top:173px;width:61px;height:1px;background:#a88b70"></div>
<div style="left:715px;top:174px;width:1px;height:44px;background:#a88b70"></div>
<div style="left:716px;top:174px;width:60px;height:22px;box-shadow:inset 0 1px 0 #f5f0eb, inset 1px 0 0 #f5f0eb, inset 0 -1px 0 #3c3a38, inset 0 -2px 0 #a88b70"></div>
<div class="t" style="left:719px;top:179px;font-size:11px">Name</div>
<div style="left:716px;top:196px;width:60px;height:11px;background:#fff;overflow:hidden"><div class="t" style="left:3px;top:2px">resid</div></div>
<div style="left:716px;top:207px;width:60px;height:11px;background:#dfd4c7;box-shadow:inset 0 1px 0 #f5f0eb"></div>
<div class="raise1" style="left:716px;top:207px;width:15px;height:11px;"></div>
<div style="left:731px;top:208px;width:1px;height:10px;background:#3c3a38"></div>
<svg style="position:absolute;left:722px;top:210px" width="4" height="7"><path d="M4 0v7L0 3.5z" fill="#000"/></svg>
<div style="left:715px;top:219px;width:13px;height:13px;background:#fff;box-shadow:inset 1px 1px 0 #a88b70, inset 2px 2px 0 #3c3a38, inset -1px -1px 0 #f5f0eb, inset -2px -2px 0 #dfd4c7"></div>
<div class="t" style="left:732px;top:219px;font-size:11px;letter-spacing:0px">Const</div>
<div style="left:767px;top:219px;width:13px;height:13px;background:#fff;box-shadow:inset 1px 1px 0 #a88b70, inset 2px 2px 0 #3c3a38"></div>
<div style="left:714px;top:234px;width:62px;height:1px;background:#8f8478"></div>
<div style="left:714px;top:235px;width:62px;height:1px;background:#f5f0eb"></div>
<div style="left:714px;top:237px;width:62px;height:1px;background:#8f8478"></div>
<div style="left:714px;top:238px;width:62px;height:1px;background:#f5f0eb"></div>
<div class="t" style="left:715px;top:242px;font-size:11px;letter-spacing:-0.1px">Attributes</div>
<div style="left:715px;top:258px;width:61px;height:111px;border-left:1px solid #000;border-top:1px solid #000;border-bottom:1px solid #000"></div>
<div style="left:716px;top:259px;width:60px;height:22px;box-shadow:inset 0 1px 0 #f5f0eb, inset 1px 0 0 #f5f0eb, inset 0 -1px 0 #3c3a38, inset 0 -2px 0 #a88b70"></div>
<div class="t" style="left:719px;top:265px;font-size:11px;letter-spacing:-0.1px">Privileges</div>
<div style="left:716px;top:281px;width:60px;height:22px;box-shadow:inset 0 1px 0 #f5f0eb, inset 1px 0 0 #f5f0eb, inset 0 -1px 0 #3c3a38, inset 0 -2px 0 #a88b70"></div>
<div class="t" style="left:719px;top:287px;font-size:11px;letter-spacing:-0.1px">virtual</div>
<div style="left:716px;top:303px;width:60px;height:22px;box-shadow:inset 0 1px 0 #f5f0eb, inset 1px 0 0 #f5f0eb, inset 0 -1px 0 #3c3a38, inset 0 -2px 0 #a88b70"></div>
<div class="t" style="left:719px;top:309px;font-size:11px;letter-spacing:-0.1px">static</div>
<div style="left:716px;top:325px;width:60px;height:22px;box-shadow:inset 0 1px 0 #f5f0eb, inset 1px 0 0 #f5f0eb, inset 0 -1px 0 #3c3a38, inset 0 -2px 0 #a88b70"></div>
<div class="t" style="left:719px;top:331px;font-size:11px;letter-spacing:-0.1px">const</div>
<div style="left:716px;top:347px;width:60px;height:21px;background:#dfd4c7;box-shadow:inset 0 1px 0 #f5f0eb"></div>
<div class="check" style="left:716px;top:351px;width:60px;height:16px;"></div>
<div class="raised" style="left:716px;top:351px;width:15px;height:16px;"></div>
<div class="raised" style="left:731px;top:351px;width:10px;height:16px;"></div>
<svg style="position:absolute;left:721px;top:355px" width="5" height="8"><path d="M5 0v8L0 4z" fill="#000"/></svg>
<div style="left:714px;top:373px;width:62px;height:1px;background:#8f8478"></div>
<div style="left:714px;top:374px;width:62px;height:1px;background:#f5f0eb"></div>
<div style="left:714px;top:376px;width:62px;height:1px;background:#8f8478"></div>
<div style="left:714px;top:377px;width:62px;height:1px;background:#f5f0eb"></div>
<div class="t" style="left:715px;top:381px;font-size:11px;letter-spacing:-0.3px">Return Value</div>
<div style="left:715px;top:397px;width:61px;height:111px;border-left:1px solid #000;border-top:1px solid #000;border-bottom:1px solid #000"></div>
<div style="left:716px;top:398px;width:60px;height:22px;box-shadow:inset 0 1px 0 #f5f0eb, inset 1px 0 0 #f5f0eb, inset 0 -1px 0 #3c3a38, inset 0 -2px 0 #a88b70"></div>
<div class="t" style="left:719px;top:404px;font-size:11px;letter-spacing:-0.1px">Name</div>
<div style="left:716px;top:420px;width:60px;height:22px;box-shadow:inset 0 1px 0 #f5f0eb, inset 1px 0 0 #f5f0eb, inset 0 -1px 0 #3c3a38, inset 0 -2px 0 #a88b70"></div>
<div class="t" style="left:719px;top:426px;font-size:11px;letter-spacing:-0.1px">Type</div>
<div style="left:716px;top:442px;width:60px;height:22px;box-shadow:inset 0 1px 0 #f5f0eb, inset 1px 0 0 #f5f0eb, inset 0 -1px 0 #3c3a38, inset 0 -2px 0 #a88b70"></div>
<div class="t" style="left:719px;top:448px;font-size:11px;letter-spacing:-0.1px">Size</div>
<div style="left:716px;top:464px;width:60px;height:22px;box-shadow:inset 0 1px 0 #f5f0eb, inset 1px 0 0 #f5f0eb, inset 0 -1px 0 #3c3a38, inset 0 -2px 0 #a88b70"></div>
<div class="t" style="left:719px;top:470px;font-size:11px;letter-spacing:-0.1px">Precision</div>
<div style="left:716px;top:486px;width:60px;height:21px;background:#dfd4c7;box-shadow:inset 0 1px 0 #f5f0eb"></div>
<div class="check" style="left:716px;top:490px;width:60px;height:16px;"></div>
<div class="raised" style="left:716px;top:490px;width:15px;height:16px;"></div>
<div class="raised" style="left:731px;top:490px;width:10px;height:16px;"></div>
<svg style="position:absolute;left:721px;top:494px" width="5" height="8"><path d="M5 0v8L0 4z" fill="#000"/></svg>
<div style="left:714px;top:512px;width:62px;height:1px;background:#8f8478"></div>
<div style="left:714px;top:513px;width:62px;height:1px;background:#f5f0eb"></div>
<div style="left:711px;top:516px;width:65px;height:19px;background:#fff;box-shadow:inset 1px 1px 0 #a88b70, inset 2px 2px 0 #3c3a38"></div>
<div style="left:714px;top:536px;width:62px;height:1px;background:#8f8478"></div>
<div style="left:714px;top:537px;width:62px;height:1px;background:#f5f0eb"></div>
<div style="left:711px;top:539px;width:65px;height:12px;background:#fff;box-shadow:inset 1px 1px 0 #a88b70, inset 2px 2px 0 #3c3a38"></div>
<div style="left:4px;top:551px;width:772px;height:5px;background:#dfd4c7"></div>
<div style="left:4px;top:556px;width:772px;height:1px;background:#3c3a38"></div>
<div style="left:4px;top:557px;width:772px;height:1px;background:#f5f0eb"></div>
<div class="t" style="left:6px;top:561px;font-size:11px;letter-spacing:-0.1px">Output</div>
<svg style="position:absolute;left:748px;top:561px" width="26" height="10" viewBox="0 0 26 10"><path d="M3.5 0.5h6v5h-2M3.5 0.5v2" stroke="#000" fill="none"/><path d="M3 1.5h6" stroke="#000"/><rect x="0.5" y="3.5" width="6" height="6" fill="none" stroke="#000"/><path d="M0 4.5h7" stroke="#000"/><path d="M16.5 1.5l7 7M23.5 1.5l-7 7" stroke="#000" stroke-width="1.6"/></svg>
<div style="left:4px;top:576px;width:772px;height:1px;background:#a88b70"></div>
<div style="left:4px;top:577px;width:755px;height:42px;background:#fff;overflow:hidden"><div class="t" style="left:1px;top:-5px;font-size:12.2px;letter-spacing:0;line-height:16px">ODC_Executable GUIContextDLL: linking  ...Setting environment for using Microsoft Visual Studio 2010 x86 tools.</div><div class="t" style="left:1px;top:11px;font-size:12.2px;letter-spacing:0;line-height:16px">update call to vsvars32.bat in vslink_cppdll.bat and remove this line</div><div style="left:0;top:27px;width:755px;height:15px;background:#ffff80"></div><div class="t" style="left:1px;top:27px;font-size:12.2px;letter-spacing:0;line-height:16px">[link] SampleGUI.dll</div></div>
<div class="check" style="left:759px;top:577px;width:16px;height:42px;"></div>
<div class="raised" style="left:759px;top:578px;width:16px;height:16px;"></div>
<div class="raised" style="left:759px;top:594px;width:16px;height:10px;"></div>
<div class="raised" style="left:759px;top:604px;width:16px;height:15px;"></div>
<svg style="position:absolute;left:763px;top:583px" width="9" height="5"><path d="M4.5 0L9 5H0z" fill="#000"/></svg>
<svg style="position:absolute;left:763px;top:609px" width="9" height="5"><path d="M0 0h9l-4.5 5z" fill="#000"/></svg>
<div style="left:4px;top:619px;width:755px;height:17px;background:#f2e2ea"></div>
<div class="raised" style="left:4px;top:620px;width:17px;height:16px;"></div>
<div class="raised" style="left:21px;top:620px;width:656px;height:16px;"></div>
<div class="raised" style="left:743px;top:620px;width:16px;height:16px;"></div>
<svg style="position:absolute;left:10px;top:624px" width="5" height="9"><path d="M5 0v9L0 4.5z" fill="#000"/></svg>
<svg style="position:absolute;left:749px;top:624px" width="5" height="9"><path d="M0 0v9l5-4.5z" fill="#000"/></svg>
<div style="left:4px;top:636px;width:772px;height:1px;background:#f5f0eb"></div>
<div style="left:775px;top:577px;width:1px;height:60px;background:#f5f0eb"></div>
<div style="left:172px;top:47px;width:282px;height:182px;background:rgba(0,0,0,0.4);filter:blur(1.2px)"></div>
<div style="left:169px;top:42px;width:282px;height:184px;box-shadow:inset 1px 1px 0 #dfd4c7, inset 2px 2px 0 #f5f0eb, inset -1px -1px 0 #3c3a38, inset -2px -2px 0 #a88b70;background:#dfd4c7"></div>
<div class="t" style="left:196px;top:49px;font-size:11px;letter-spacing:0.4px">Insert</div>
<svg style="position:absolute;left:432px;top:51px" width="5" height="9"><path d="M0 0v9l5-4.5z" fill="#000"/></svg>
<svg style="position:absolute;left:172px;top:45px" width="20" height="20" viewBox="0 0 20 20"><path d="M4.5 4.5l6 5" stroke="#9a5010" stroke-width="6" stroke-linecap="round"/><path d="M4.5 4.5l6 5" stroke="#f0a040" stroke-width="4" stroke-linecap="round"/><circle cx="10.5" cy="9.5" r="2.5" fill="#f8a030" stroke="#9a5010" stroke-width="0.8"/><circle cx="4.5" cy="15" r="2.8" fill="#1020c0"/><circle cx="3.8" cy="14.2" r="0.9" fill="#7080f0"/><circle cx="15" cy="15" r="2.8" fill="#40c030"/><circle cx="14.3" cy="14.2" r="0.9" fill="#a0f090"/></svg>
<div style="left:173px;top:69px;width:274px;height:1px;background:#a88b70"></div>
<div style="left:173px;top:70px;width:274px;height:1px;background:#f5f0eb"></div>
<div style="left:172px;top:75px;width:276px;height:20px;background:#0c2266"></div>
<div class="t" style="left:196px;top:79px;font-size:11px;letter-spacing:-0.18px;color:#fff">Build context DLL from ResourceRefs</div>
<div style="left:173px;top:98px;width:274px;height:1px;background:#a88b70"></div>
<div style="left:173px;top:99px;width:274px;height:1px;background:#f5f0eb"></div>
<div class="t" style="left:196px;top:109px;font-size:11px;letter-spacing:-0.14px">Generate Include Files</div>
<div class="t" style="left:196px;top:131px;font-size:11px;letter-spacing:-0.23px">Generate all Source Files</div>
<div class="t" style="left:196px;top:153px;font-size:11px;letter-spacing:0.03px">Generate all .Net Interfaces</div>
<div class="t" style="left:196px;top:175px;font-size:11px;letter-spacing:-0.21px">Generate schema</div>
<div class="t" style="left:372px;top:131px;font-size:11px;letter-spacing:0.17px">Ctrl+Shift+S</div>
<svg style="position:absolute;left:432px;top:176px" width="5" height="9"><path d="M0 0v9l5-4.5z" fill="#000"/></svg>
<div style="left:173px;top:195px;width:274px;height:1px;background:#a88b70"></div>
<div style="left:173px;top:196px;width:274px;height:1px;background:#f5f0eb"></div>
<div class="t" style="left:196px;top:206px;font-size:11px;letter-spacing:-0.07px">GenerateProjectDefinitions</div>
<svg style="position:absolute;left:173px;top:103px" width="20" height="20" viewBox="0 0 20 20"><text x="1" y="12" font-size="9.5" fill="#008000" font-family="Liberation Sans">H</text><path d="M11.5 9V5.5H16" stroke="#5a6270" stroke-width="1.4" fill="none"/><rect x="15" y="4" width="2" height="2" fill="#404040"/><path d="M8 12Q8 8.5 12 8.5Q16 8.5 16 12z" fill="#9a4a2a" stroke="#4a1a0a" stroke-width="0.8"/><rect x="7.5" y="11.5" width="9" height="8" rx="1" fill="#8a3a22" stroke="#4a1a0a"/><rect x="9" y="14" width="6" height="2" fill="#e8b0b0"/><rect x="10" y="17" width="4" height="1" fill="#c08070"/></svg>
<svg style="position:absolute;left:173px;top:125px" width="20" height="20" viewBox="0 0 20 20"><path d="M4.5 5v5M2 7.5h5M4.5 12v5M2 14.5h5" stroke="#000090" stroke-width="1.3"/><path d="M11.5 9V5.5H16" stroke="#5a6270" stroke-width="1.4" fill="none"/><rect x="15" y="4" width="2" height="2" fill="#404040"/><path d="M8 12Q8 8.5 12 8.5Q16 8.5 16 12z" fill="#9a4a2a" stroke="#4a1a0a" stroke-width="0.8"/><rect x="7.5" y="11.5" width="9" height="8" rx="1" fill="#8a3a22" stroke="#4a1a0a"/><rect x="9" y="14" width="6" height="2" fill="#e8b0b0"/><rect x="10" y="17" width="4" height="1" fill="#c08070"/></svg>
<svg style="position:absolute;left:173px;top:147px" width="20" height="20" viewBox="0 0 20 20"><text x="0.5" y="8" font-size="7" font-weight="bold" fill="#000" font-family="Liberation Serif">I-o</text><path d="M11.5 9V5.5H16" stroke="#5a6270" stroke-width="1.4" fill="none"/><rect x="15" y="4" width="2" height="2" fill="#404040"/><path d="M8 12Q8 8.5 12 8.5Q16 8.5 16 12z" fill="#c8a070" stroke="#4a1a0a" stroke-width="0.8"/><rect x="7.5" y="11.5" width="9" height="8" rx="1" fill="#8a3a22" stroke="#4a1a0a"/><rect x="9" y="14" width="6" height="2" fill="#e8b0b0"/><rect x="10" y="17" width="4" height="1" fill="#c08070"/></svg>
<svg style="position:absolute;left:173px;top:168px" width="20" height="20" viewBox="0 0 20 20"><rect x="1.5" y="5.5" width="8" height="12" fill="#fff" stroke="#505050"/><path d="M3 9h2M3 11h5M3 13h5M3 15h5" stroke="#707070"/><path d="M5 8.5h3" stroke="#e08010"/><path d="M11.5 9V5.5H16" stroke="#5a6270" stroke-width="1.4" fill="none"/><rect x="15" y="4" width="2" height="2" fill="#404040"/><path d="M8 12Q8 8.5 12 8.5Q16 8.5 16 12z" fill="#9a4a2a" stroke="#4a1a0a" stroke-width="0.8"/><rect x="7.5" y="11.5" width="9" height="8" rx="1" fill="#8a3a22" stroke="#4a1a0a"/><rect x="9" y="14" width="6" height="2" fill="#e8b0b0"/><rect x="10" y="17" width="4" height="1" fill="#c08070"/></svg>
<svg style="position:absolute;left:173px;top:200px" width="20" height="20" viewBox="0 0 20 20"><rect x="1.5" y="5.5" width="8" height="12" fill="#fff" stroke="#505050"/><path d="M3 9h2M3 11h5M3 13h5M3 15h5" stroke="#707070"/><path d="M5 8.5h3" stroke="#e08010"/><path d="M11.5 9V5.5H16" stroke="#5a6270" stroke-width="1.4" fill="none"/><rect x="15" y="4" width="2" height="2" fill="#404040"/><path d="M8 12Q8 8.5 12 8.5Q16 8.5 16 12z" fill="#9a4a2a" stroke="#4a1a0a" stroke-width="0.8"/><rect x="7.5" y="11.5" width="9" height="8" rx="1" fill="#8a3a22" stroke="#4a1a0a"/><rect x="9" y="14" width="6" height="2" fill="#e8b0b0"/><rect x="10" y="17" width="4" height="1" fill="#c08070"/></svg>
<svg style="position:absolute;left:155px;top:60px" width="260" height="50" viewBox="0 0 260 50"><ellipse cx="129" cy="25" rx="125" ry="20" fill="none" stroke="#8a0a16" stroke-width="2.8"/></svg>
</body></html>
